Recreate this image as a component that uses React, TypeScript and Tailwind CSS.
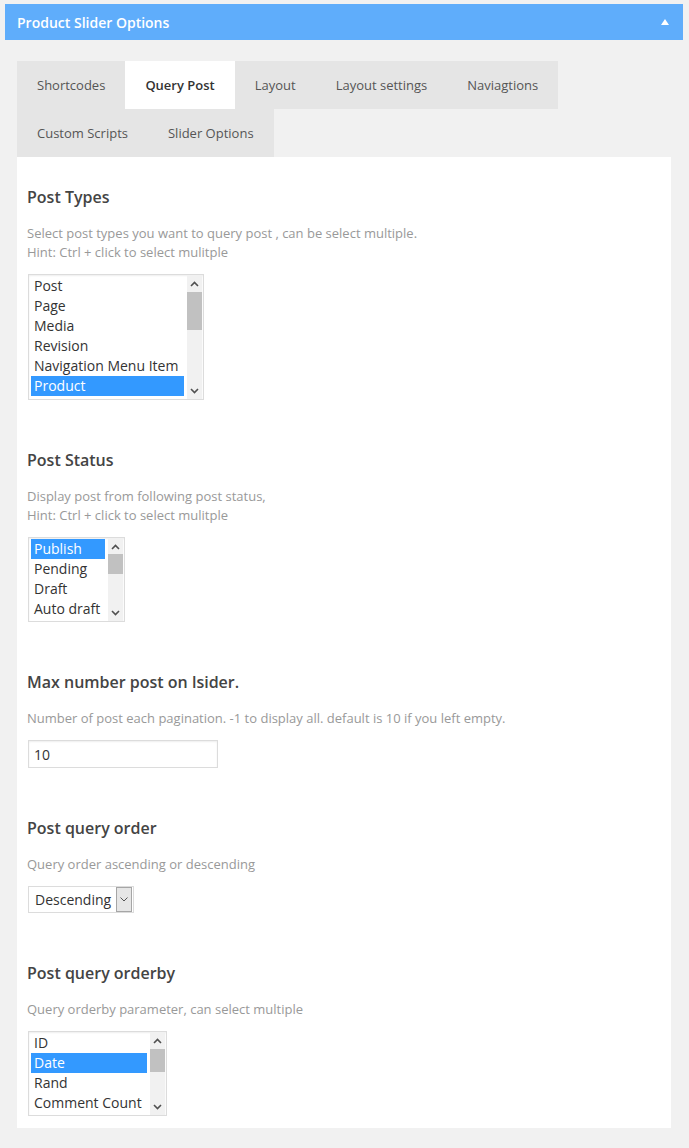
import type { ReactNode } from "react";

const TABS_ROW = ["Shortcodes", "Query Post", "Layout", "Layout settings", "Naviagtions", "Custom Scripts", "Slider Options"];

function Chevron({ up }: { up?: boolean }) {
  return (
    <svg width="9" height="6" viewBox="0 0 9 6" className="block">
      <path
        d={up ? "M1 5 L4.5 1.5 L8 5" : "M1 1 L4.5 4.5 L8 1"}
        fill="none"
        stroke="#505050"
        strokeWidth="1.6"
      />
    </svg>
  );
}

function ListBox({
  items,
  selected,
  width,
  height,
  thumbTop,
  thumbHeight,
}: {
  items: string[];
  selected: string;
  width: number;
  height: number;
  thumbTop: number;
  thumbHeight: number;
}) {
  return (
    <div
      className="flex border border-[#dcdcdc] bg-white shadow-[inset_0_1px_2px_rgba(0,0,0,0.07)]"
      style={{ width, height }}
    >
      <div className="min-w-0 flex-1 overflow-hidden pt-[1px] pl-[2px] pr-[3px]">
        {items.map((item) => (
          <div
            key={item}
            className={
              "h-5 truncate pl-[3px] text-[14px] leading-5 " +
              (item === selected ? "bg-[#3399ff] text-white" : "text-[#333]")
            }
          >
            {item}
          </div>
        ))}
      </div>
      <div className="relative mr-[1px] w-[15px] flex-none bg-[#f1f1f1]">
        <div className="absolute top-[6px] left-[3px]">
          <Chevron up />
        </div>
        <div className="absolute left-0 w-[15px] bg-[#c1c1c1]" style={{ top: thumbTop, height: thumbHeight }} />
        <div className="absolute bottom-[5px] left-[3px]">
          <Chevron />
        </div>
      </div>
    </div>
  );
}

function Section({ title, desc, children }: { title: string; desc: string[]; children: ReactNode }) {
  return (
    <section>
      <h3 className="text-[16px] leading-[22px] font-semibold text-[#444]">{title}</h3>
      <div className="mt-4 text-[13px] leading-[19px] text-[#999]">
        {desc.map((d) => (
          <div key={d}>{d}</div>
        ))}
      </div>
      <div className="mt-3 pl-[1px]">{children}</div>
    </section>
  );
}

export default function App() {
  return (
    <div className="min-h-[1148px] bg-[#f1f1f1] pt-1 font-['Open_Sans',sans-serif]">
      <div className="ml-[5px] flex h-9 w-[678px] items-center justify-between bg-[#5fadfb] pr-[14px] pl-3">
        <span className="text-[14px] font-semibold text-white">Product Slider Options</span>
        <svg width="8" height="6" viewBox="0 0 8 6">
          <path d="M4 0 L8 6 L0 6 Z" fill="#fff" />
        </svg>
      </div>

      <div className="mt-[21px] ml-[17px] w-[654px]">
        <div className="flex flex-wrap">
          {TABS_ROW.map((t) => (
            <div
              key={t}
              className={
                "flex h-12 items-center px-5 pt-[2px] text-[13px] " +
                (t === "Query Post" ? "bg-white font-semibold text-[#333]" : "bg-[#e5e5e5] text-[#555]")
              }
            >
              {t}
            </div>
          ))}
        </div>

        <div className="flex flex-col gap-[49px] bg-white pt-[29px] pr-3 pb-3 pl-[10px]">
          <Section
            title="Post Types"
            desc={["Select post types you want to query post , can be select multiple.", "Hint: Ctrl + click to select mulitple"]}
          >
            <ListBox
              items={["Post", "Page", "Media", "Revision", "Navigation Menu Item", "Product"]}
              selected="Product"
              width={176}
              height={126}
              thumbTop={17}
              thumbHeight={38}
            />
          </Section>

          <Section title="Post Status" desc={["Display post from following post status,", "Hint: Ctrl + click to select mulitple"]}>
            <ListBox
              items={["Publish", "Pending", "Draft", "Auto draft"]}
              selected="Publish"
              width={97}
              height={85}
              thumbTop={16}
              thumbHeight={20}
            />
          </Section>

          <Section
            title="Max number post on lsider."
            desc={["Number of post each pagination. -1 to display all. default is 10 if you left empty."]}
          >
            <div className="flex h-[28px] w-[190px] items-center border border-[#dcdcdc] bg-white pl-[5px] text-[14px] text-[#333] shadow-[inset_0_1px_2px_rgba(0,0,0,0.07)]">
              10
            </div>
          </Section>

          <Section title="Post query order" desc={["Query order ascending or descending"]}>
            <div className="flex h-[27px] w-[106px] items-center border border-[#dcdcdc] bg-white pl-[6px] text-[14px] text-[#333]">
              <span className="flex-1">Descending</span>
              <div className="mr-[1px] flex h-[25px] w-[16px] flex-none items-center justify-center border border-[#a6a6a6] bg-[#e6e6e6]">
                <svg width="8" height="5" viewBox="0 0 8 5">
                  <path d="M0.5 0.5 L4 4 L7.5 0.5" fill="none" stroke="#555" strokeWidth="1" />
                </svg>
              </div>
            </div>
          </Section>

          <Section title="Post query orderby" desc={["Query orderby parameter, can select multiple"]}>
            <ListBox
              items={["ID", "Date", "Rand", "Comment Count"]}
              selected="Date"
              width={139}
              height={85}
              thumbTop={17}
              thumbHeight={23}
            />
          </Section>
        </div>
      </div>
    </div>
  );
}
